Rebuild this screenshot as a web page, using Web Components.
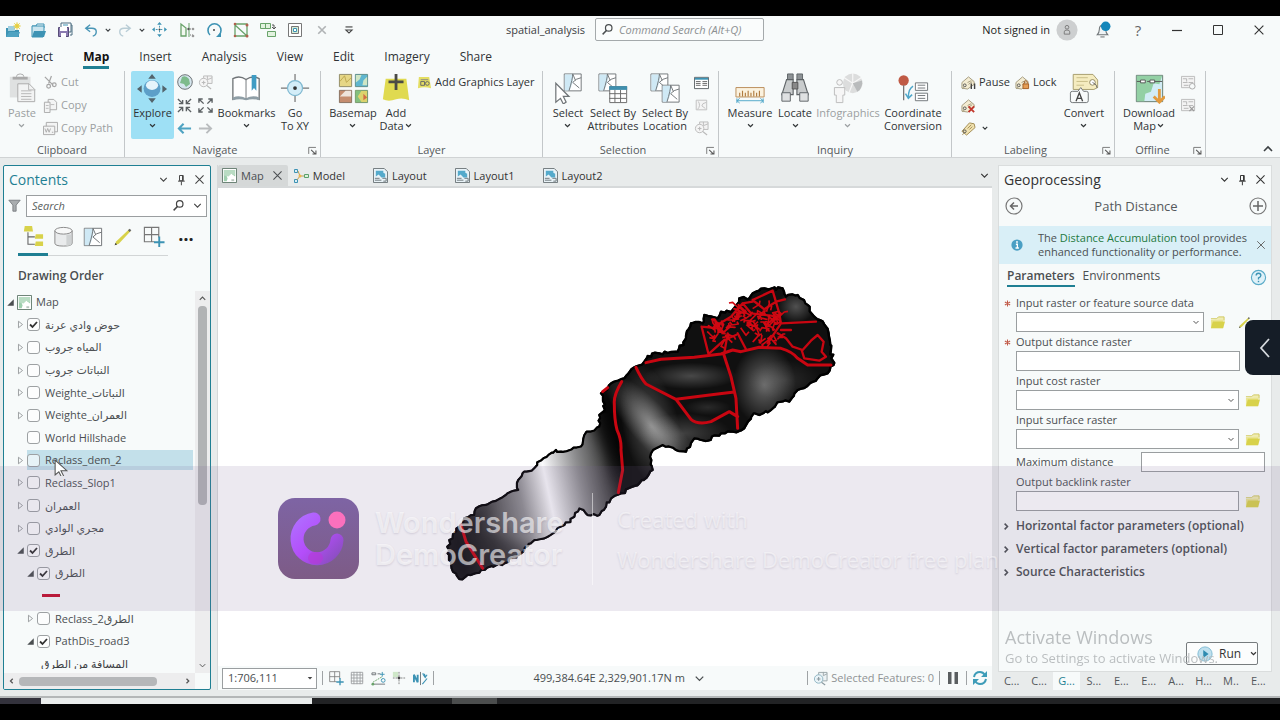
<!DOCTYPE html>
<html lang="en">
<head>
<meta charset="utf-8">
<title>spatial_analysis</title>
<style>
:root{--teal:#1f7f93;--ink:#3c4043;--line:#9da1a3;--face:#f7fafa;--ui:"Open Sans","Noto Sans","DejaVu Sans",sans-serif}
*{box-sizing:border-box}
body{margin:0;background:#000;color:var(--ink);font:11px/14px var(--ui)}
</style>
</head>
<body>
<gis-app></gis-app>
<script>
const BASE = `<style>*{box-sizing:border-box}:host{display:block}:host([hidden]){display:none}
button,input,select{font:inherit;color:inherit;margin:0;padding:0;background:none;border:0;border-radius:0;min-width:0}
button{display:inline-flex;align-items:center;justify-content:center}
a{color:inherit;text-decoration:none}ul{list-style:none;margin:0;padding:0}</style>`;

function define(name, html, setup) {
  const tpl = document.createElement('template');
  customElements.define(name, class extends HTMLElement {
    connectedCallback() {
      if (this.shadowRoot) return;
      tpl.innerHTML = BASE + (typeof html === 'function' ? html(this) : html);
      this.attachShadow({ mode: 'open' }).append(tpl.content.cloneNode(true));
      if (setup) setup(this, this.shadowRoot);
    }
  });
}

const G = '#6f7477', T = '#3d93b4', Y = '#d8d24a';
const tag = `<path d="M1 14V8l7-6 6 5v3l-7 5z" fill="#f4ecd2" stroke="#a39a7c"/><circle cx="4" cy="11" r="1.5" fill="none" stroke="#555"/><path d="M3 13q-2 2-1 2M7 8l4-2M8 10l4-3" stroke="#a39a7c" fill="none"/>`;
const sel = (x, y, s) => `<g transform="translate(${x} ${y}) scale(${s})"><path d="M0 0h18v18H0z" fill="#fff" stroke="${G}"/><path d="M.5.5h9q1 7-4 17h-5z" fill="#cfe9f5"/><path d="M9 0q0 5-4 18M18 4q-6 1-9 5l7 6M9 0l3 7" fill="none" stroke="${G}"/></g>`;
const globeMap = `<path d="M.5.5h15v15H.5z" fill="#fff" stroke="#617a6c"/><path d="M2 2h5l1 3-3 4 1 2-1 3H2zM8 2h6v7l-3-2z" fill="#9fd0ae"/><path d="M2 2h12v6l-4-2-3 3-5-1z" fill="#b9dcc3"/><path d="M10 12h3v2h-3z" fill="#b9c6be"/>`;
const layout = `<path d="M.5.5H12l3.500 3.500v11.500H.5z" fill="#e9f3f8" stroke="#6d7579"/><path d="M3 3h8v2l2 1v4H9L6 7 3 9z" fill="#55aacb"/><path d="M2 11h5M2 13h7M10 11h4v3h-3" stroke="#6d7579" fill="none"/>`;
const off = `<path d="M.5 1.500h14v12H.5z" fill="#f3f3f3" stroke="#bbb"/><path d="M2 4h4v3M8 4h5M2 8h5M8 8h5M3 11h5" stroke="#b5b5b5" fill="none"/>`;
const ICONS = {
  newproj:`<path d="M1 6h4l1 2h8v7H1z" fill="${T}"/><path d="M1 15l3-5h11l-2 5z" fill="#4fa3c2"/><path d="M3 4h7v5H3z" fill="#9fcfe0"/><circle cx="12" cy="4" r="2.500" fill="#f0dc55"/><path d="M12 0v8M8 4h8M9 1l6 6M15 1L9 7" stroke="#e2cc45" stroke-width=".7"/>`,
  open:`<path d="M1 4h4l1-2h7v4" fill="none" stroke="${T}"/><path d="M1 4h12v4l-1 7H1z" fill="#cbe5ef" stroke="${T}"/><path d="M1 15l2-6h12l-2 6z" fill="${T}"/>`,
  save:`<path d="M4 1h10v9H4z" fill="#fff" stroke="#4b6d80"/><path d="M14 3h1v10h-2" fill="none" stroke="#4b6d80"/><path d="M1.500 5.500h10v9h-10z" fill="#8a7ab0" stroke="#574d78"/><path d="M3 5h7v4H3zM4 11h5v4H4z" fill="#fff"/><path d="M6 3h5" stroke="${T}"/>`,
  undo:`<path d="M7 2L2 6l5 4M2 6h7q5 0 5 4t-4 5" fill="none" stroke="#4a96b6" stroke-width="1.600"/>`,
  redo:`<path d="M9 2l5 4-5 4M14 6H7q-5 0-5 4t4 5" fill="none" stroke="#b9cdd6" stroke-width="1.600"/>`,
  chev:`<path d="M5 6.500l3 3 3-3" fill="none" stroke="currentColor" stroke-width="1.500"/>`,
  chevW:`<path d="M4 6l4 4 4-4" fill="none" stroke="currentColor" stroke-width="1.400"/>`,
  chevU:`<path d="M4 10l4-4 4 4" fill="none" stroke="currentColor" stroke-width="1.600"/>`,
  chevR:`<path d="M6 5l3 3-3 3" fill="none" stroke="currentColor" stroke-width="1.700"/>`,
  chevL:`<path d="M9 5L6 8l3 3" fill="none" stroke="currentColor" stroke-width="1.700"/>`,
  move:`<path d="M8 0l2.500 3h-5zM8 16l2.500-3h-5zM0 8l3-2.500v5zM16 8l-3-2.500v5z" fill="${T}"/><path d="M8 4v3M8 9v3M4 8h3M9 8h3" stroke="${T}" stroke-dasharray="2 1"/><circle cx="8" cy="8" r="1" fill="#444"/>`,
  split:`<path d="M2 2v12h5V6z" fill="#f2f9f0" stroke="#69a36a" stroke-width="1.300"/><path d="M10 1v14" stroke="#69a36a"/><path d="M11 7h3M11 13h3" stroke="#777" stroke-dasharray="1 1"/><circle cx="9.500" cy="7" r="1.200" fill="#555"/><circle cx="14" cy="7" r="1.300" fill="#999"/><circle cx="14" cy="14" r="1.300" fill="#999"/>`,
  rotate:`<path d="M4 13a6.500 6.500 0 1 1 9 0" fill="none" stroke="${T}" stroke-width="1.600"/><path d="M10 15h5v-5z" fill="${T}"/><circle cx="8" cy="8" r="1" fill="#444"/>`,
  verts:`<path d="M2 2h12v12L2 3v11h12" fill="none" stroke="#69a36a" stroke-width="1.300"/><g fill="#b0604d"><circle cx="2" cy="2" r="1.300"/><circle cx="14" cy="3" r="1.500"/><circle cx="14" cy="14" r="1.500"/><circle cx="2" cy="14" r="1.300"/></g>`,
  merge:`<path d="M.5 1.500h10v5H.5zM5.500 1.500v5M7.500 9.500h8v5h-8z" fill="#e2f2df" stroke="#69a36a"/><path d="M12 3h2v4m-2-2l2 2 2-2" fill="none" stroke="#555"/>`,
  frame:`<path d="M1.500 1.500h13v13h-13z" fill="#fff" stroke="#777"/><path d="M4.500 4.500h7v7h-7z" fill="#d3ead3" stroke="#777"/><path d="M6.500 6.500h3v3h-3z" fill="#fff" stroke="${T}"/>`,
  x:`<path d="M3 3l10 10M13 3L3 13" stroke="currentColor" stroke-width="1.300"/>`,
  xq:`<path d="M3 3l10 10M13 3L3 13" stroke="currentColor" stroke-width="2.200"/>`,
  custom:`<path d="M4 4.500h8" stroke="#444" stroke-width="1.300"/><path d="M4.500 8L8 11.500 11.500 8z" fill="none" stroke="#444" stroke-width="1.300"/>`,
  search:`<circle cx="9.500" cy="6" r="4" fill="none" stroke="currentColor" stroke-width="1.500"/><path d="M7 9l-5 5" stroke="currentColor" stroke-width="1.800"/>`,
  user:`<circle cx="12" cy="12" r="11.500" fill="#cdcfd0"/><circle cx="12" cy="9" r="2" fill="none" stroke="#777"/><path d="M9 16.500v-2.500q0-2 3-2t3 2v2.500z" fill="none" stroke="#777"/>`,
  bell:`<path d="M3 13q2-2 2-5 0-4 3-4t3 4q0 3 2 5z" fill="#eef3f5" stroke="${G}"/><path d="M6 15h4" stroke="${G}"/><circle cx="11" cy="5" r="4.500" fill="#1386ba"/>`,
  min:`<path d="M3 8.500h10" stroke="#333" stroke-width="1.200"/>`,
  max:`<path d="M3.500 3.500h9v9h-9z" fill="none" stroke="#333"/>`,
  paste:`<path d="M3 4h22v22H3z" fill="#dfe1e1"/><path d="M6 4h16v3H6z" fill="#aaa"/><path d="M10 4q0-3 4-3t4 3" fill="none" stroke="#aaa"/><path d="M11.500 11.500h12l6 6v13h-18z" fill="#f2f3f3" stroke="#aaa"/><path d="M23 11v7h7M15 19h11M15 22h11M15 25h11M15 28h11" stroke="#b5b5b5" fill="none"/>`,
  cut:`<path d="M2 2l9 9M9 1L6 9" stroke="#a5a5a5" stroke-width="1.300"/><circle cx="6" cy="12" r="2" fill="none" stroke="#a5a5a5" stroke-width="1.300"/><circle cx="12" cy="10.500" r="2" fill="none" stroke="#a5a5a5" stroke-width="1.300"/>`,
  copy:`<path d="M5.500 1.500h6l3 3v8h-9z" fill="#f3f4f4" stroke="#aaa"/><path d="M1.500 4.500h6v11h-6z" fill="#f3f4f4" stroke="#aaa"/><path d="M3 8h3M3 11h3M8 7h4" stroke="#bbb"/>`,
  copypath:`<path d="M3.500 1.500h12v10h-12z" fill="#f3f4f4" stroke="#aaa"/><path d="M.5 5.500h12v9H.5z" fill="#f3f4f4" stroke="#aaa"/><path d="M2 8l1.500 4L5 8l1.500 4L8 8M9.500 12h1.500" stroke="#aaa" fill="none"/>`,
  explore:`<path d="M16 1l4 5h-8zM16 32l4-5h-8zM0 17l5-4v8zM32 17l-5-4v8z" fill="#53646c"/><circle cx="16" cy="16.500" r="9" fill="#5d9fc8"/><ellipse cx="16" cy="13" rx="6.500" ry="5" fill="#e5f4fb"/>`,
  globe:`<circle cx="8" cy="8" r="7.300" fill="#d5e6ee" stroke="${G}"/><path d="M5 3q4-2 7 2l1 5-4 3-2-3-4-1z" fill="#7dbb8c"/>`,
  zoomsel:`<path d="M6 1h9v8H6z" fill="#f3f3f3" stroke="#bbb"/><path d="M10 1v4l5-2" stroke="#bbb" fill="none"/><circle cx="6" cy="8" r="4.500" fill="#f5f5f5" stroke="#bbb"/><path d="M4 8h4M6 6v4M9 11l5 4" stroke="#bbb" stroke-width="1.200"/>`,
  zin:`<path d="M1 1l5 5M6 2v4H2M15 1l-5 5M10 2v4h4M1 15l5-5M2 10h4v4M15 15l-5-5M14 10h-4v4" fill="none" stroke="#5c6164" stroke-width="1.500"/>`,
  zout:`<path d="M1 1l5 5M1 5V1h4M15 1l-5 5M11 1h4v4M1 15l5-5M1 11v4h4M15 15l-5-5M15 11v4h-4" fill="none" stroke="#5c6164" stroke-width="1.500"/>`,
  back:`<path d="M15 8H2M7 3L2 8l5 5" fill="none" stroke="#4fa3c2" stroke-width="2.200"/>`,
  fwd:`<path d="M1 8h13M9 3l5 5-5 5" fill="none" stroke="#b9bcbe" stroke-width="2"/>`,
  book:`<path d="M2 6q7-4 14 1 7-5 14-1v22q-7-3-14 0-7-3-14 0z" fill="#fff" stroke="${G}" stroke-width="1.400"/><path d="M2 26q7-3 14 1 7-4 14-1v3q-7-2-14 0-7-2-14 0z" fill="#8f9ea6"/><path d="M16 7v20" stroke="${G}"/><path d="M22 2h5v17l-2.500-3-2.500 3z" fill="#3f9cc4"/>`,
  goxy:`<path d="M16 1v9M16 22v9M1 16h9M22 16h9" stroke="#777" stroke-width="1.300"/><circle cx="16" cy="16" r="8" fill="#d3edf8" stroke="#7fb8d0" stroke-width="1.300"/><circle cx="16" cy="16" r="2" fill="#333"/>`,
  basemap:`<path d="M1.500 1.500h13v13h-13z" fill="#e6d787" stroke="#8e8a66"/><path d="M2 9l5-6 2 7 5-5" stroke="#bda850" fill="none"/><path d="M18.500 1.500h13v13h-13z" fill="#5fb6cf" stroke="#5d8c86"/><path d="M19 2h6l-2 5-4 3zM27 8l4-4v9h-5z" fill="#cfe6c5"/><path d="M1.500 18.500h13v13h-13z" fill="#c58d6f" stroke="#86705f"/><path d="M2 25l6-6h6v6z" fill="#eee4dc"/><path d="M18.500 18.500h13v13h-13z" fill="#dcd36d" stroke="#6c936b"/><path d="M19 19h6l-4 6 4 6h-6z" fill="#83c07e"/><path d="M27 22l4 4-4 3z" fill="#d36d45"/>`,
  adddata:`<path d="M5 6h22l3 23q-7-3-14-1-8 3-14 0z" fill="#e0da50"/><path d="M16 1v17M8 9.500h16" stroke="#4b4b46" stroke-width="3"/>`,
  addgfx:`<path d="M2 2h11l2 12q-7-2-14 0z" fill="#e4de62"/><path d="M4 7h4v4H4z" fill="none" stroke="#666"/><circle cx="11" cy="9" r="2" fill="none" stroke="#666"/><path d="M4 5h8" stroke="#888"/>`,
  select:`${sel(12,1,1)}<path d="M3 11v20l5-4 3 6 3-2-3-6h6z" fill="#fff" stroke="${G}" stroke-width="1.300"/>`,
  selattr:`${sel(1,1,1)}<path d="M12.500 14.500h18v17h-18z" fill="#fff" stroke="#666"/><path d="M12 14h19v4H12z" fill="#3f8fae"/><path d="M12 22h18M12 27h18M18 18v13M24 18v13" stroke="#666"/>`,
  selloc:`${sel(1,1,1)}${sel(13,13,1)}`,
  table:`<path d="M.5 2.500h15v12H.5z" fill="#fff" stroke="#5c6265"/><path d="M1 3h14v2H1z" fill="${T}"/><path d="M2 7h5M2 9h5M2 11h5M9 7h5M9 9h5M9 11h5" stroke="#666"/>`,
  selclr:`<path d="M2.500 2.500h12v11h-12z" fill="#f4f4f4" stroke="#bbb"/><path d="M5 4q3 5-1 9M14 5q-5 1-5 4l4 3" stroke="#bbb" fill="none"/>`,
  measure:`<path d="M1 15.500h30v10H1z" fill="#fbf2df" stroke="#b98b56"/><path d="M5 25v-4M8 25v-6M11 25v-4M14 25v-6M17 25v-4M20 25v-6M23 25v-4M26 25v-6" stroke="#b07a3e" stroke-width="1.200"/><path d="M2 29.500h28M2 27v5M30 27v5M5 27l-3 2.500L5 32M27 27l3 2.500-3 2.500" fill="none" stroke="#4fa6c9"/>`,
  locate:`<path d="M8 1h6v6H8zM18 1h6v6h-6z" fill="#8d9295" stroke="#5e6366"/><path d="M7 7h7v16H2zM25 7h-7v16h12z" fill="#c9cccd" stroke="#5e6366" stroke-width="1.200"/><path d="M2 21h9v9H2zM21 21h9v9h-9z" fill="#dfe1e2" stroke="#5e6366"/><path d="M13 10h6v7h-6z" fill="#888" stroke="#555"/>`,
  info:`<circle cx="21" cy="11" r="10.500" fill="#dcdddd"/><path d="M21 11V0M21 11l10 4M21 11L12 5M21 11l-4 10M21 11l9-6" stroke="#f6f6f6" stroke-width="1.300"/><path d="M21 11l10-3q1 8-5 12z" fill="#b9bbbc"/><circle cx="7" cy="10" r="3" fill="#f6f6f6" stroke="#bbb"/><path d="M1.500 15.500h11v8h-2v8h-7v-8h-2z" fill="#f6f6f6" stroke="#bbb"/>`,
  coord:`<circle cx="6" cy="8" r="5.500" fill="#c05a45"/><path d="M6 13v16" stroke="#777" stroke-width="1.400"/><path d="M16 14q-5 3-5 12m-3-4l3 5 4-4" fill="none" stroke="#4fa6c9" stroke-width="1.600"/><path d="M18.500 10.500h13v8h-13zM18.500 21.500h13v8h-13z" fill="#fff" stroke="${G}"/><path d="M21 13h8M21 16h8M21 24h8M21 27h8" stroke="${G}"/>`,
  pauseL:`${tag}<path d="M11 9v6M14.500 9v6" stroke="#444" stroke-width="1.500"/>`,
  lockL:`${tag}<path d="M8.500 9.500h6v5h-6z" fill="#e59d55" stroke="#a35d20"/><path d="M10 9V7q1.500-2 3 0v2" fill="none" stroke="#a35d20"/>`,
  tagx:`${tag}<path d="M8 9l6 6M14 9l-6 6" stroke="#c2372c" stroke-width="2"/>`,
  tagm:`<path d="M1 11l8-9 5 1 1 4-9 8z" fill="#f1e2b0" stroke="#a08a50"/><circle cx="4" cy="11" r="1.500" fill="none" stroke="#555"/><path d="M3 13q-2 2-1 2M7 8l4-4M9 9l3-3" stroke="#a08a50" fill="none"/>`,
  convert:`<path d="M4.500 1.500h21l5 6v8l-4 2h-22z" fill="#f5ecc0" stroke="#a49a6a"/><path d="M8 5h12M8 9h12M8 13h8" stroke="#c9bd86"/><circle cx="25" cy="10" r="3" fill="#fff" stroke="#8c8258"/><path d="M25 10q5 2 5 6" fill="none" stroke="#666"/><path d="M3.500 19.500h6l3-4 3 4h3q2 0 2 2v8q0 2-2 2h-15q-2 0-2-2v-8q0-2 2-2z" fill="#f8fafa" stroke="#6c7072"/><path d="M7.500 30l3.500-9 3.500 9M9 27h4" fill="none" stroke="#444" stroke-width="1.400"/>`,
  download:`<path d="M2.500 2.500h28v28h-28z" fill="#d2ecf5" stroke="#617a6c"/><path d="M3 3h27l-3 9-6-1-3 9-6 2-1 8H3z" fill="#93d0a4"/><path d="M3 9h7M14 9h3M21 9h9" stroke="#555"/><path d="M7 7.500h5v3H7zM17 7.500h5v3h-5z" fill="#fff" stroke="#555"/><path d="M27 17v14m-6-6l6 6 6-6" fill="none" stroke="#e29a3e" stroke-width="3"/>`,
  off1:`${off}<circle cx="12" cy="12" r="3" fill="#f7fafa" stroke="#aaa"/>`,
  off2:`${off}<path d="M9 9l5 5M14 9l-5 5" stroke="#999" stroke-width="1.300"/>`,
  launch:`<path d="M2.500 13V3.500H13" fill="none" stroke="#666" stroke-width="1.200"/><path d="M6 7l6 6M13 8v5H8" fill="none" stroke="#555" stroke-width="1.500"/>`,
  pin:`<path d="M6 2h5v7H6zM4 9.500h9M8.500 10v5M10 2v7" fill="none" stroke="currentColor" stroke-width="1.300"/>`,
  filter:`<path d="M1 1.500h14l-5 6V15H6V7.500z" fill="#a9adaf" stroke="#6f7477"/>`,
  tree:`<path d="M3 1h8l1 6H2zM15 10h8v5h-9zM15 18h8v5h-9z" fill="${Y}"/><path d="M6.500 8v13H14M7 13h7" fill="none" stroke="#666" stroke-width="1.200"/>`,
  db:`<path d="M3 6v13q0 3 9 3t9-3V6z" fill="#e9ebec" stroke="#888"/><ellipse cx="12" cy="6" rx="9" ry="3.500" fill="#f7f8f8" stroke="#888"/><path d="M15 10h5v11l-5 1z" fill="#cfd2d3"/>`,
  selpane:`${sel(2.5,2.5,1.05)}`,
  pencil:`<path d="M2 22l2-5L19 3l2 2L7 20z" fill="${Y}"/><path d="M18 4l2-2 2 2-2 2z" fill="#666"/><path d="M2 22l1-3 2 2z" fill="#444"/>`,
  grid:`<path d="M2.500 2.500h15v15h-15zM10 2.500v15M2.500 10h15" fill="#f7fafa" stroke="#777" stroke-width="1.200"/><path d="M18 13v10M13 18h10" stroke="#f7fafa" stroke-width="4"/><path d="M18 12v11M12.500 18h11" stroke="${T}" stroke-width="2"/>`,
  map:globeMap, layout,
  model:`<path d="M1.500 1.500h3v3h-3zM1.500 11.500h3v3h-3z" fill="#d9eef6" stroke="${T}"/><path d="M5 3l2 5-3 4M8 8h3" fill="none" stroke="#b9a05a"/><circle cx="7" cy="8" r="1.500" fill="#f0b64a"/><path d="M11.500 6.500h4v3h-4z" fill="#dff0da" stroke="#5aa26b"/>`,
  snapgrid:`<path d="M1.500 1.500h13v13h-13zM4.500 1v14M8 1v14M11.500 1v14M1 4.500h14M1 8h14M1 11.500h14" fill="none" stroke="#9b9fa1"/>`,
  snap:`<path d="M1 2h4v2H1zM7 3h3M1 14h14" stroke="${G}" fill="none"/><path d="M12 1v5M9.500 3.500h5" stroke="${T}"/><path d="M2 12l10-6" stroke="#69a36a" stroke-dasharray="2 1"/><circle cx="13" cy="10" r="2" fill="none" stroke="${T}"/><circle cx="2" cy="14" r="1.500" fill="#69a36a"/>`,
  infer:`<path d="M1 1h6v6H1z" fill="#cfe8c9"/><path d="M8 1v14M1 8h14" stroke="#777" stroke-dasharray="2 1"/><circle cx="8" cy="8" r="1.600" fill="#444"/>`,
  north:`<path d="M1 12V4l4 8V4" fill="none" stroke="${T}" stroke-width="2"/><path d="M8 1v14" stroke="${G}"/><path d="M10 14l5-6M10 3q3 0 3 3m-2-2l2 3 2-3" fill="none" stroke="${T}" stroke-width="1.200"/>`,
  zsel:`<path d="M6 1.500h9v9H6z" fill="#edf3f5" stroke="#9ba6aa"/><path d="M11 1v4l4-2" stroke="#9ba6aa" fill="none"/><circle cx="6" cy="8.500" r="4.500" fill="#eaf4f8" stroke="#8fb4c2"/><path d="M4 8.500h4M6 6.500v4M9 12l4 3" stroke="#8b9aa0" stroke-width="1.200"/>`,
  pause:`<path d="M3 2h3.500v12H3zM9.500 2H13v12H9.500z" fill="#5a5e60"/>`,
  refresh:`<path d="M2 7q1-5 6-5 3 0 5 3M14 9q-1 5-6 5-3 0-5-3" fill="none" stroke="#3d9cb8" stroke-width="2"/><path d="M15 1v6H9zM1 15V9h6z" fill="#3d9cb8"/>`,
  backc:`<circle cx="9" cy="9" r="8" fill="none" stroke="#777" stroke-width="1.200"/><path d="M13 9H5.500M9 5.500L5.500 9 9 12.500" fill="none" stroke="#666" stroke-width="1.500"/>`,
  addc:`<circle cx="9" cy="9" r="8" fill="none" stroke="#777" stroke-width="1.200"/><path d="M9 4v10M4 9h10" stroke="#666" stroke-width="1.500"/>`,
  helpc:`<circle cx="9" cy="9" r="7.500" fill="#dff1f8" stroke="#5aabc8" stroke-width="1.200"/><path d="M6.500 7q0-2.500 2.500-2.500T11.500 7Q11.500 8.500 9 9.500V11" fill="none" stroke="#3d93b4" stroke-width="1.400"/><path d="M9 12.500v1.500" stroke="#3d93b4" stroke-width="1.500"/>`,
  infoc:`<circle cx="8" cy="8" r="7.500" fill="#4a9fc4"/><path d="M6.500 7H8.500v5M6 12h4.500" fill="none" stroke="#fff" stroke-width="1.700"/><circle cx="8" cy="4" r="1.200" fill="#fff"/>`,
  folder:`<path d="M1 4h6l2-2h6v4" fill="#f0ecb4" stroke="#cfc75a"/><path d="M1 14V5h13v9z" fill="#eae593"/><path d="M1 14l2-7h13l-2 7z" fill="${Y}"/>`,
  run:`<circle cx="9" cy="9" r="8" fill="#bfe0ee" stroke="#7ab8d2"/><path d="M7 4.500v9l6-4.500z" fill="#2f8bb0"/>`,
  tri:`<path d="M5.500 4v8l5-4z" fill="none" stroke="#8b8f91"/>`,
  trio:`<path d="M12 4v8H4z" fill="#4a4e50"/>`,
  ast:`<path d="M8 1v14M2 4.500l12 7M14 4.500l-12 7" stroke="#c25a48" stroke-width="2.400"/>`,
  arrow:`<path d="M2 1v14l3.500-3 2.500 5 2-1-2.500-5H13z" fill="#fff" stroke="#555"/>`
};
const BIG = new Set(['paste','explore','book','goxy','basemap','adddata','select','selattr','selloc','measure','locate','info','coord','convert','download']);
const MID = new Set(['tree','db','selpane','pencil','grid','user']);
const ROUND = new Set(['backc','addc','helpc','run']);

define('ui-icon', el => {
  const n = el.getAttribute('name'), s = el.getAttribute('size') || 16;
  const v = BIG.has(n) ? 33 : MID.has(n) ? 24 : ROUND.has(n) ? 18 : 16;
  return `<style>:host{display:inline-flex;flex:none}svg{display:block}</style><svg width="${s}" height="${s}" viewBox="0 0 ${v} ${v}" fill="none" aria-hidden="true">${ICONS[n]}</svg>`;
});

const ib = (n, label, s = 16, c = '') => `<button type="button" class="${c}" aria-label="${label}"><ui-icon name="${n}" size="${s}"></ui-icon></button>`;

define('title-bar', `<style>
:host{display:grid;grid-template-columns:minmax(0,1fr) auto minmax(0,1fr);align-items:center;height:27px}
.tools{display:flex;align-items:center}.tools button{width:27px;height:24px}.tools .a{width:26px}.tools .c{width:8px}.tools .off{color:#b0b3b5}
.mid{display:flex;align-items:center;gap:10px;margin-right:10px}
label{display:flex;align-items:center;gap:5px;border:1px solid #a4a9ab;border-radius:2px;width:169px;height:23px;padding:0 4px 0 5px;color:#4a4e50;background:#fafcfc}
input{flex:1;outline:0;font-style:italic}input::placeholder{color:#8c9092;opacity:1}
.right{display:flex;align-items:center;justify-content:flex-end;color:#222;padding-right:1px}
.right button{width:41px;height:24px;color:#333}.right .n{width:36px}.right .av{width:34px}.right .q{font-size:15px;color:#666}
</style>
<div class="tools">${ib('newproj','New project',16,'a')}${ib('open','Open',16,'a')}${ib('save','Save',16,'a')}${ib('undo','Undo',14,'a')}${ib('chev','Undo list',12,'c')}${ib('redo','Redo',14,'a')}${ib('chev','Redo list',12,'c')}${ib('move','Move',15)}${ib('split','Split')}${ib('rotate','Rotate')}${ib('verts','Edit vertices')}${ib('merge','Merge')}${ib('frame','Frame')}${ib('xq','Clear',12,'off')}${ib('custom','Customize toolbar',14)}</div>
<div class="mid"><span>spatial_analysis</span><label><ui-icon name="search" size="13"></ui-icon><input type="search" placeholder="Command Search (Alt+Q)" aria-label="Command Search"></label></div>
<div class="right"><span>Not signed in</span>${ib('user','Account',22,'av')}${ib('bell','Notifications',17,'n')}<button type="button" class="n q" aria-label="Help">?</button>${ib('min','Minimize')}${ib('max','Maximize')}${ib('x','Close',14)}</div>`);

define('ribbon-tabs', `<style>
nav{display:flex;gap:30px;padding:2px 14px 0;height:28px;align-items:center;font-size:12px;line-height:16px;color:#303336}
a{padding:2px 0 1px;border-bottom:3px solid transparent}a[aria-current]{font-weight:700;color:#111;border-color:var(--teal)}
</style><nav><a href="#project">Project</a><a href="#map" aria-current="page">Map</a><a href="#insert">Insert</a><a href="#analysis">Analysis</a><a href="#view">View</a><a href="#edit">Edit</a><a href="#imagery">Imagery</a><a href="#share">Share</a></nav>`);

define('ribbon-group', el => `<style>
:host{display:grid;grid-template-rows:1fr 14px;border-right:1px solid #c3c7c9;min-width:0}
.body{display:flex;align-items:flex-start;padding:0 0 0 var(--pad,6px)}
.foot{display:flex;align-items:center;text-align:center;color:#55595c}
.foot span{flex:1}.foot button{width:15px;height:14px}
</style><div class="body"><slot></slot></div><div class="foot"><span>${el.getAttribute('label')}</span>${el.hasAttribute('launch') ? ib('launch', el.getAttribute('label') + ' options', 11) : ''}</div>`);

define('big-button', el => `<style>
:host{width:var(--w)}
button{flex-direction:column;justify-content:flex-start;width:100%;height:68px;padding:2px 0 0;line-height:13px;color:#2f3335;white-space:nowrap}
:host([on]) button{background:#9ee0f5;border-radius:2px}:host([disabled]) button{color:#9b9fa1}
.t{display:flex;flex-direction:column;align-items:center;padding-top:2px}.l{display:flex;align-items:center;height:13px}ui-icon[name=chev]{margin:0 -2px}
</style><button type="button"${el.hasAttribute('disabled') ? ' disabled' : ''}><ui-icon name="${el.getAttribute('icon')}" size="31"></ui-icon><span class="t"><span class="l">${el.getAttribute('l1')}</span><span class="l">${el.getAttribute('l2') || ''}${el.hasAttribute('menu') ? '<ui-icon name="chev" size="13"></ui-icon>' : ''}</span></span></button>`);

define('small-button', el => `<style>
:host{display:flex}button{height:22px;gap:3px;padding:0 1px;color:#2f3335;white-space:nowrap}:host([disabled]) button{color:#9b9fa1}
</style><button type="button"${el.hasAttribute('disabled') ? ' disabled' : ''} aria-label="${el.getAttribute('label')}"><ui-icon name="${el.getAttribute('icon')}" size="${el.getAttribute('size') || 15}"></ui-icon>${el.hasAttribute('text') ? `<span>${el.getAttribute('label')}</span>` : ''}${el.hasAttribute('menu') ? '<ui-icon name="chev" size="12"></ui-icon>' : ''}</button>`);

const bb = (i, w, a, b = '', x = '') => `<big-button icon="${i}" style="--w:${w}px" l1="${a}" l2="${b}" ${x}></big-button>`;
const sb = (i, l, x = '') => `<small-button icon="${i}" label="${l}" ${x}></small-button>`;
define('ribbon-bar', `<style>
:host{display:grid;grid-template-columns:125px 196px 222px 176px 233px 163px 91px 1fr;height:87px;border-bottom:1px solid #d0d3d4}
.col{display:grid;justify-items:start;align-content:start;grid-auto-rows:23px;align-items:start}.two{grid-template-columns:21px 21px;justify-items:center}
.one{width:20px;justify-items:center}.end{display:flex;align-items:flex-end;justify-content:flex-end;padding:0 4px 0 0}.lock{width:48px}.pause{width:54px}
</style>
<ribbon-group label="Clipboard" style="--pad:2px">${bb('paste',40,'Paste','','menu disabled')}<div class="col">${sb('cut','Cut','text disabled')}${sb('copy','Copy','text disabled')}${sb('copypath','Copy Path','text disabled')}</div></ribbon-group>
<ribbon-group label="Navigate" launch>${bb('explore',43,'Explore','','menu on')}<div class="col two">${sb('globe','Full extent','size="16"')}${sb('zoomsel','Zoom to selection','disabled')}${sb('zin','Fixed zoom in')}${sb('zout','Fixed zoom out')}${sb('back','Previous extent')}${sb('fwd','Next extent','disabled')}</div>${bb('book',61,'Bookmarks','','menu')}${bb('goxy',36,'Go','To XY')}</ribbon-group>
<ribbon-group label="Layer">${bb('basemap',52,'Basemap','','menu')}${bb('adddata',34,'Add','Data','menu')}<div class="col" style="padding-left:3px">${sb('addgfx','Add Graphics Layer','text')}</div></ribbon-group>
<ribbon-group label="Selection" launch>${bb('select',38,'Select','','menu')}${bb('selattr',52,'Select By','Attributes')}${bb('selloc',52,'Select By','Location')}<div class="col one">${sb('table','Attribute table')}${sb('selclr','Clear selection','disabled size="14"')}${sb('zoomsel','Zoom to selection','disabled')}</div></ribbon-group>
<ribbon-group label="Inquiry">${bb('measure',50,'Measure','','menu')}${bb('locate',40,'Locate','','menu')}${bb('info',66,'Infographics','','menu disabled')}${bb('coord',64,'Coordinate','Conversion')}</ribbon-group>
<ribbon-group label="Labeling" launch style="--pad:8px"><div class="col pause">${sb('pauseL','Pause','text')}${sb('tagx','View unplaced')}${sb('tagm','More labeling','menu')}</div><div class="col lock">${sb('lockL','Lock','text')}</div>${bb('convert',44,'Convert','','menu')}</ribbon-group>
<ribbon-group label="Offline" launch style="--pad:8px">${bb('download',52,'Download','Map','menu')}<div class="col one" style="margin-left:3px">${sb('off1','Sync','disabled')}${sb('off2','Remove','disabled')}</div></ribbon-group>
<div class="end">${ib('chevU','Collapse ribbon',16)}</div>`);

const paneHead = t => `<header class="head"><h2>${t}</h2>${ib('chevW','Options',13)}${ib('pin','Auto hide',12)}${ib('x','Close',13)}</header>`;
const headCss = `.head{display:flex;align-items:center;height:27px;padding:0 2px 0 5px;color:#444}.head h2{flex:1;margin:0;font-weight:400;font-size:14px;line-height:20px}.head button{width:18px;height:18px}`;

define('tree-item', el => {
  const c = el.getAttribute('toggle'), l = el.getAttribute('label');
  return `<style>
:host{display:flex;align-items:center;min-height:0}
.row{display:flex;align-items:center;width:100%;height:20px;padding-left:calc(var(--d,0) * 10px + 10px)}
:host([selected]) .hl{background:#c3e0ea}
.tg{width:13px;height:14px;flex:none}.hl{display:flex;align-items:center;flex:1;height:20px;gap:4px;white-space:nowrap;color:#4b4f52}
input{appearance:none;width:13px;height:13px;border:1px solid #9da1a3;border-radius:3px;background:rgba(255,255,255,.6);flex:none}
input:checked{background:#fdfefe url("data:image/svg+xml,%3Csvg xmlns='http://www.w3.org/2000/svg' viewBox='0 0 11 11'%3E%3Cpath d='M2 5.500l2.500 2.500L9 3' fill='none' stroke='%23333' stroke-width='1.800'/%3E%3C/svg%3E") center/11px no-repeat}
label{display:flex;align-items:center;gap:5px}.red{width:18px;height:3px;background:#c40f2c;margin-left:18px}.cap{margin-left:17px}
</style><div class="row">${el.hasAttribute('symbol') ? '<span class="red"></span>' : el.hasAttribute('caption') ? `<span class="cap" dir="rtl">${l}</span>` :
`${c ? ib(c === 'open' ? 'trio' : 'tri', 'Expand', 13, 'tg') : '<span class="tg"></span>'}<span class="hl">${el.hasAttribute('root') ? `<ui-icon name="map" size="15"></ui-icon><span>${l}</span>` : `<label><input type="checkbox"${el.hasAttribute('checked') ? ' checked' : ''}><bdi>${l}</bdi></label>`}</span>`}</div>`;
});

const ti = (l, d, t, x = '') => `<tree-item label="${l}" style="--d:${d}" ${t ? `toggle="${t}"` : ''} ${x}></tree-item>`;
define('contents-pane', `<style>${headCss}
:host{display:flex;flex-direction:column;background:var(--face);border:1px solid var(--teal);border-radius:2px;min-height:0;overflow:hidden}
.head h2{color:var(--teal)}
.find{display:flex;gap:5px;align-items:center;height:25px;padding:0 3px 0 4px}
.find label{flex:1;min-width:0;display:flex;align-items:center;border:1px solid #9a9ea0;height:22px;padding:0 2px 0 5px;background:#fff;gap:6px;color:#444}
.find input{flex:1;width:0;outline:0;font-style:italic}.find input::placeholder{color:#5b5f61;opacity:1}
.modes{display:flex;align-items:center;height:38px;padding:0 0 0 14px}.modes button{width:30px;height:38px;border-bottom:1px solid #d2d5d6}.modes .on{border-bottom:3px solid var(--teal)}.modes .dots{border:0;width:36px;color:#222;font-weight:700;font-size:18px;padding-bottom:6px}
h3{margin:0;padding:5px 14px 0;font-size:12px;line-height:30px;height:35px;font-weight:600;color:#4a4e50}
.scroll{flex:1;display:grid;grid-template-columns:1fr 15px;grid-template-rows:minmax(0,1fr) 16px;min-height:0}
.clip{overflow:hidden;min-height:0;margin-bottom:4px}.rows{display:grid;grid-auto-rows:minmax(0,1fr);height:calc(100% + 6px)}
.rows tree-item{margin-right:2px}
.sb{display:flex;align-items:center;background:#ededee;color:#555}.v{flex-direction:column}.v i{width:9px;height:199px;border-radius:4px;background:#b1b3b5}.h i{height:9px;width:138px;border-radius:4px;background:#b5b7b9}.grow{flex:1}
.sb button{width:15px;height:15px}
</style>${paneHead('Contents')}
<div class="find"><ui-icon name="filter" size="13"></ui-icon><label><input type="search" placeholder="Search" aria-label="Search contents"><ui-icon name="search" size="13"></ui-icon><ui-icon name="chevW" size="13"></ui-icon></label></div>
<div class="modes">${ib('tree','List by drawing order',22,'on')}${ib('db','List by data source',23)}${ib('selpane','List by selection',22)}${ib('pencil','List by editing',20)}${ib('grid','List by snapping',23)}<button type="button" class="dots" aria-label="More">…</button></div>
<h3>Drawing Order</h3>
<div class="scroll"><div class="clip"><div class="rows">
${ti('Map',-1,'open','root')}${ti('حوض وادي عرنة',0,'closed','checked')}${ti('المياه جروب',0,'closed')}${ti('النباتات جروب',0,'closed')}${ti('Weighte_النباتات',0,'closed')}${ti('Weighte_العمران',0,'closed')}${ti('World Hillshade',0,'')}${ti('Reclass_dem_2',0,'closed','selected')}${ti('Reclass_Slop1',0,'closed')}${ti('العمران',0,'closed')}${ti('مجري الوادي',0,'closed')}${ti('الطرق',0,'open','checked')}${ti('الطرق',1,'open','checked')}${ti('',1,'','symbol')}${ti('Reclass_2الطرق',1,'closed')}${ti('PathDis_road3',1,'open','checked')}${ti('المسافة من الطرق',1,'','caption')}
</div></div>
<div class="sb v">${ib('chevU','Scroll up',11)}<i></i><span class="grow"></span>${ib('chevW','Scroll down',11)}</div>
<div class="sb h">${ib('chevL','Scroll left',12)}<i></i><span class="grow"></span>${ib('chevR','Scroll right',12)}</div></div>`);

define('map-drawing', `<style>:host{display:block;min-height:0;background:#fff;overflow:hidden}svg{display:block;width:100%;height:100%}</style>
<svg viewBox="217 188 774 478" role="img" aria-label="Path distance raster with roads">
<defs><linearGradient id="w" gradientUnits="userSpaceOnUse" x1="60" y1="710" x2="575" y2="600"><stop offset="0" stop-color="#1c1c1e"/><stop offset=".2" stop-color="#484848"/><stop offset=".4" stop-color="#8f8f91"/><stop offset=".52" stop-color="#dededf"/><stop offset=".56" stop-color="#fafafc"/><stop offset=".62" stop-color="#d8d8da"/><stop offset=".75" stop-color="#8e8e90"/><stop offset=".9" stop-color="#464646"/><stop offset="1" stop-color="#0c0c0c"/></linearGradient>
<radialGradient id="g"><stop offset="0" stop-color="#fff" stop-opacity=".9"/><stop offset=".5" stop-color="#fff" stop-opacity=".45"/><stop offset="1" stop-color="#fff" stop-opacity="0"/></radialGradient>
<clipPath id="c"><path class="edge"/></clipPath><filter id="b" x="-30%" y="-30%" width="160%" height="160%"><feGaussianBlur stdDeviation="20"/></filter></defs>
<g transform="translate(430 270) scale(.3333)">
<path class="edge" fill="#101010" stroke="#000" stroke-width="7" stroke-linejoin="round"/>
<g clip-path="url(#c)">
<path d="M0 430H548L570 530 565 700 300 1000H0z" fill="url(#w)"/>
<path d="M470 430L560 330 572 560 560 660 530 560z" fill="#000" opacity=".7" filter="url(#b)"/>
<path d="M60 760L180 700 150 780 330 840 130 960 40 900z" fill="#000" opacity=".4" filter="url(#b)"/>
<g fill="url(#g)"><ellipse cx="665" cy="470" rx="210" ry="62" transform="rotate(48 665 470)" opacity=".4"/><ellipse cx="660" cy="470" rx="85" ry="190" transform="rotate(-12 660 470)" opacity=".3"/><ellipse cx="760" cy="490" rx="140" ry="60" opacity=".22"/><ellipse cx="1000" cy="345" rx="95" ry="120" opacity=".4"/><ellipse cx="1060" cy="330" rx="110" ry="60" opacity=".12"/><ellipse cx="780" cy="318" rx="140" ry="40" opacity=".26"/><ellipse cx="1095" cy="110" rx="55" ry="50" opacity=".3"/><ellipse cx="830" cy="412" rx="70" ry="24" opacity=".12"/></g>
</g>
<path class="edge" fill="none" stroke="#000" stroke-width="6" stroke-linejoin="round"/>
<g fill="none" stroke="#c80611" stroke-width="8" stroke-linejoin="round" stroke-linecap="round">
<path d="M572 335Q548 375 550 400 550 450 558 480 572 510 570 540L575 600 562 668M615 292Q630 325 645 342L680 360 735 388 780 448Q800 465 840 455L895 425 920 440M735 388L860 372 910 366M645 278L690 268 790 262 870 252 905 240 930 245 985 232 1050 235Q1085 245 1100 265L1130 285 1200 285M878 252L900 320 915 385 920 475" stroke-width="9"/>
<path d="M90 765L105 815 155 895M515 365l15-12" stroke-width="9"/>
<path d="M812 170L832 250M812 170L860 175M1050 160L1155 155M1040 190L1065 205 1085 230 1115 240 1140 212 1160 195 1178 215 1172 245 1185 260 1165 272 1120 265 1112 240M965 90L1025 62 1045 130 1050 160 1010 220M1035 95L1062 88M965 90L1000 118 1035 95M920 190L945 238M890 190L880 250M835 250L880 210 915 195M1050 180H1080M850 170L900 140 935 100 965 95M935 100L960 130 1045 140" stroke-width="7"/>
</g>
<g class="city" fill="none" stroke="#d00812" stroke-width="5" stroke-linejoin="round"></g>
</g></svg>`, (el, root) => {
  const P = [[85,927],[62,895],[50,850],[55,810],[85,770],[100,745],[130,735],[135,715],[165,705],[200,690],[230,670],[262,660],[262,630],[280,605],[310,595],[330,572],[375,540],[390,545],[450,530],[467,485],[505,470],[505,435],[522,420],[510,370],[550,335],[580,325],[610,292],[640,275],[650,258],[685,250],[740,245],[765,205],[780,160],[815,160],[820,135],[860,145],[870,125],[905,120],[925,85],[955,85],[965,70],[1000,55],[1055,55],[1065,80],[1100,75],[1130,105],[1150,140],[1185,170],[1200,240],[1208,285],[1190,310],[1100,360],[1075,395],[1050,395],[1020,420],[985,435],[968,430],[940,475],[905,485],[870,490],[830,512],[790,505],[765,545],[735,540],[695,525],[660,550],[665,600],[625,640],[570,670],[540,685],[505,735],[470,735],[445,715],[430,740],[400,765],[350,800],[310,810],[270,850],[220,880],[150,900]];
  let s = 7;
  const r = () => (s = (s * 16807) % 2147483647) / 2147483647;
  let d = 'M';
  P.forEach((p, i) => {
    const q = P[(i + 1) % P.length], n = Math.max(1, Math.round(Math.hypot(q[0] - p[0], q[1] - p[1]) / 10));
    for (let k = 0; k < n; k++) {
      const j = k ? 9 : 0;
      d += `${Math.round(p[0] + (q[0] - p[0]) * k / n + (r() - .5) * j)} ${Math.round(p[1] + (q[1] - p[1]) * k / n + (r() - .5) * j)} `;
    }
  });
  root.querySelectorAll('.edge').forEach(e => e.setAttribute('d', d + 'z'));
  // Street web: short crossing strokes gathered round three town centres.
  let c = '';
  [[872, 180, 45, 60, 26], [935, 145, 70, 60, 30], [1010, 165, 65, 90, 42]].forEach(([cx, cy, w, h, n]) => {
    for (let i = 0; i < n; i++) {
      const x = cx + (r() - .5) * w, y = cy + (r() - .5) * h;
      c += `M${Math.round(x)} ${Math.round(y)}l${Math.round((r() - .5) * 50)} ${Math.round((r() - .5) * 50)}l${Math.round((r() - .5) * 24)} ${Math.round((r() - .5) * 24)}`;
    }
  });
  root.querySelector('.city').innerHTML = `<path d="${c}"/>`;
});

define('map-view', `<style>
:host{display:grid;grid-template-rows:23px minmax(0,1fr) 24px;min-width:0;min-height:0;border-left:1px solid #d5d8d9}
.tabs{display:flex;align-items:center;gap:28px;border-bottom:2px solid #d6d9da;color:#333}
.tabs a{display:flex;align-items:center;gap:4px;height:21px;white-space:nowrap}
.tabs .on{background:#d5d8d8;padding:0 4px;border-radius:2px 2px 0 0;color:#4b4f52;margin-right:-23px}.on ui-icon:last-child{margin-left:3px}
.sp{flex:1}.tabs button{width:16px}
.status{display:flex;align-items:center;background:var(--face);color:#4a4e50;gap:5px;padding:0 4px}
select{appearance:none;width:95px;height:21px;border:1px solid #9a9ea0;background:#fff url("data:image/svg+xml,%3Csvg xmlns='http://www.w3.org/2000/svg' viewBox='0 0 8 8'%3E%3Cpath d='M1 2.500h6L4 6z' fill='%23444'/%3E%3C/svg%3E") right 3px center/6px no-repeat;padding:0 5px}
.s{width:1px;height:14px;background:#9fa3a5}.status button{width:16px;height:16px}.c{display:flex;gap:7px;align-items:center;white-space:nowrap}.dim{color:#8f9395;display:flex;align-items:center;gap:3px;white-space:nowrap}
</style>
<nav class="tabs" aria-label="Views"><a class="on" href="#map" aria-current="page"><ui-icon name="map" size="15"></ui-icon>Map<ui-icon name="x" size="13"></ui-icon></a><a href="#model"><ui-icon name="model" size="16"></ui-icon>Model</a><a href="#layout"><ui-icon name="layout" size="15"></ui-icon>Layout</a><a href="#layout1"><ui-icon name="layout" size="15"></ui-icon>Layout1</a><a href="#layout2"><ui-icon name="layout" size="15"></ui-icon>Layout2</a><span class="sp"></span>${ib('chevW','View list',13)}</nav>
<map-drawing></map-drawing>
<div class="status"><select aria-label="Map scale"><option>1:706,111</option></select><span class="s"></span>${ib('grid','Add grid',16)}${ib('snapgrid','Grid',14)}${ib('snap','Snapping',15)}${ib('infer','Inference',14)}${ib('north','Rotation',15)}<span class="s"></span><span class="sp"></span><span class="c"><span>499,384.64E 2,329,901.17N m</span>${ib('chevW','Coordinate units',15)}</span><span class="sp"></span><span class="s"></span><span class="dim"><ui-icon name="zsel" size="15"></ui-icon>Selected Features: 0</span><span class="s"></span>${ib('pause','Pause drawing',16)}<span class="s"></span>${ib('refresh','Refresh',16)}</div>`);

define('param-field', el => {
  const k = el.getAttribute('kind') || 'text';
  return `<style>
:host{display:grid;grid-template-columns:17px minmax(0,1fr) auto;color:#4b4f52}
label{grid-column:2/-1;grid-row:1;line-height:18px;height:18px}.req{grid-column:1;grid-row:1;align-self:center;justify-self:center}
.ctl{grid-column:2;grid-row:2;width:100%;height:20px;border:1px solid #9a9ea0;background:#fff;outline:0;padding:0 4px}
select{appearance:none;background:#fff url("data:image/svg+xml,%3Csvg xmlns='http://www.w3.org/2000/svg' viewBox='0 0 8 8'%3E%3Cpath d='M1.500 3L4 5.500 6.500 3' fill='none' stroke='%23555'/%3E%3C/svg%3E") right 3px center/8px no-repeat!important}
.b{grid-column:3;grid-row:2;display:flex}.b button{width:27px;height:20px}.b:empty{width:26px}:host([pencil]) .b{padding-right:8px}
:host([inline]) label{grid-column:2;line-height:20px;height:20px}:host([inline]) .ctl{grid-row:1;grid-column:3;width:124px;margin-right:1px}
</style>${el.hasAttribute('required') ? '<ui-icon class="req" name="ast" size="7"></ui-icon>' : ''}<label for="f">${el.getAttribute('label')}</label>${k === 'select' ? '<select class="ctl" id="f"><option></option></select>' : '<input class="ctl" id="f" type="text">'}${el.hasAttribute('inline') ? '' : `<span class="b">${el.hasAttribute('folder') ? ib('folder','Browse',15) : ''}${el.hasAttribute('pencil') ? ib('pencil','Draw',13) : ''}</span>`}`;
});

define('geo-pane', `<style>${headCss}
:host{display:grid;grid-template-rows:minmax(0,1fr) 18px;min-height:0;min-width:0}
.pane{background:var(--face);border:1px solid #dadddd;position:relative;display:flex;flex-direction:column;min-height:0}
.head{color:#333}.sub{display:grid;grid-template-columns:20px 1fr 20px;align-items:center;height:26px;padding:0 3px 0 5px;text-align:center;font-size:13px;line-height:20px;color:#55595c}
.note{display:grid;grid-template-columns:34px 1fr 20px;align-items:center;background:#d9eff7;margin-top:7px;height:38px;color:#4b4f52;white-space:nowrap;padding-left:1px}.note ui-icon{justify-self:center}.note a{color:#1f7a3e}.note button{justify-self:center;color:#666}.note p{margin:0 0 0 4px}
.tabs{display:flex;align-items:center;gap:8px;padding:0 4px 0 8px;height:26px;font-size:12px;color:#4b4f52}.tabs a{border-bottom:2px solid transparent;line-height:18px}.tabs .on{border-color:var(--teal);font-weight:600}.tabs .sp{flex:1}
form{display:flex;flex-direction:column;gap:1px;padding:4px 5px 0 0}
form .m{margin-top:2px}
summary{list-style:none;display:flex;align-items:center;gap:2px;height:22px;font-size:12px;font-weight:600;color:#4b4f52;white-space:nowrap}details:first-of-type{margin-top:3px}
.act{position:absolute;left:6px;bottom:4px;color:#b4b8ba;white-space:nowrap;pointer-events:none;opacity:.9}.act b{display:block;font-weight:400;font-size:18px;line-height:24px}.act span{font-size:13px;line-height:18px}
.run{position:absolute;right:13px;bottom:6px;width:72px;height:23px;border:1px solid #777c7e;border-radius:2px;background:#fcfdfd;color:#333;justify-content:flex-start;padding:0 0 0 10px;gap:6px}.run span{flex:1;text-align:left;font-size:12px}
.foot{display:flex}.foot a{flex:1;text-align:center;line-height:18px;color:#55595c}.foot .on{background:var(--face);color:var(--teal)}
</style>
<div class="pane">${paneHead('Geoprocessing')}
<div class="sub">${ib('backc','Back',18)}<span>Path Distance</span>${ib('addc','Add',18)}</div>
<div class="note"><ui-icon name="infoc" size="12"></ui-icon><p>The <a href="#da">Distance Accumulation</a> tool provides<br>enhanced functionality or performance.</p>${ib('x','Dismiss',12)}</div>
<nav class="tabs"><a class="on" href="#p">Parameters</a><a href="#e">Environments</a><span class="sp"></span>${ib('helpc','Help',17)}</nav>
<form><param-field required kind="select" folder pencil label="Input raster or feature source data"></param-field><param-field required label="Output distance raster"></param-field><param-field kind="select" folder label="Input cost raster"></param-field><param-field kind="select" folder label="Input surface raster"></param-field><param-field class="m" inline label="Maximum distance"></param-field><param-field folder label="Output backlink raster"></param-field>
<details><summary><ui-icon name="chevR" size="15"></ui-icon>Horizontal factor parameters (optional)</summary></details><details><summary><ui-icon name="chevR" size="15"></ui-icon>Vertical factor parameters (optional)</summary></details><details><summary><ui-icon name="chevR" size="15"></ui-icon>Source Characteristics</summary></details></form>
<button type="button" class="run"><ui-icon name="run" size="16"></ui-icon><span>Run</span><ui-icon name="chev" size="13"></ui-icon></button>
<div class="act"><b>Activate Windows</b><span>Go to Settings to activate Windows.</span></div></div>
<nav class="foot"><a href="#1">C...</a><a href="#2">C...</a><a href="#3" class="on">G...</a><a href="#4">S...</a><a href="#5">E...</a><a href="#6">E...</a><a href="#7">A...</a><a href="#8">H...</a><a href="#9">M..</a><a href="#10">E...</a></nav>`);

define('demo-banner', `<style>
:host{position:absolute;left:0;right:0;top:466px;height:145px;background:rgba(120,100,150,.14);pointer-events:none;display:flex;align-items:center;padding-left:278px;color:rgba(255,255,255,.6);white-space:nowrap;text-shadow:0 1px 2px rgba(90,80,110,.18)}
svg{flex:none}b{font:600 29px/32px Inter,sans-serif;width:217px;margin-left:16px}
p{margin:0;padding:6px 0 6px 24px;border-left:1px solid rgba(255,255,255,.5);font-size:22px;line-height:40px;color:rgba(255,255,255,.5)}
</style><svg width="81" height="81" viewBox="0 0 81 81"><defs><linearGradient id="a" x2="0" y2="1"><stop stop-color="#7e64a4"/><stop offset="1" stop-color="#7d5b86"/></linearGradient><linearGradient id="r" x1="0" y1="0" x2="1" y2="1"><stop stop-color="#b06cff"/><stop offset=".5" stop-color="#b44dfa"/><stop offset="1" stop-color="#8a4ec0"/></linearGradient></defs><rect width="81" height="81" rx="17" fill="url(#a)"/><path d="M36 21a20 20 0 1 0 23 21" fill="none" stroke="url(#r)" stroke-width="13" stroke-linecap="round"/><path d="M36 60h3" stroke="#b838d8" stroke-width="12" stroke-linecap="round" opacity=".6"/><circle cx="59" cy="22" r="8.500" fill="#fb70bd"/></svg>
<b>Wondershare<br>DemoCreator</b><p>Created with<br>Wondershare DemoCreator free plan</p>`);

define('side-handle', `<style>:host{position:absolute;right:0;top:320px}button{width:35px;height:55px;background:#151d27;border-radius:8px 0 0 8px;color:#d5d9dd}svg{margin-left:4px}</style><button type="button" aria-label="Open side panel"><svg width="12" height="20" viewBox="0 0 12 20"><path d="M10 1L2 10l8 9" fill="none" stroke="currentColor" stroke-width="1.800"/></svg></button>`);
define('mouse-pointer', `<style>:host{position:absolute;left:53px;top:459px;pointer-events:none}</style><ui-icon name="arrow" size="17"></ui-icon>`);

define('gis-app', `<style>
:host{position:relative;display:flex;flex-direction:column;min-height:100vh;padding:16px 0;background:#000}
.win{flex:1;display:flex;flex-direction:column;background:#e8ebeb;border-bottom:2px solid #b4b7b8;min-height:0}
.top{background:var(--face)}
.work{flex:1;display:grid;grid-template-columns:208px minmax(0,1fr) 274px;gap:6px;padding:7px 8px 6px 3px;min-height:0;height:0}
.task{height:6px;display:flex;background:#222325}.task i{width:41px;background:#33323c}.task b{width:271px;background:#e9ecec}.task u{width:45px;margin-left:140px;background:#4b4d4d}
</style><div class="win"><div class="top"><title-bar></title-bar><ribbon-tabs></ribbon-tabs><ribbon-bar></ribbon-bar></div>
<div class="work"><contents-pane></contents-pane><map-view></map-view><geo-pane></geo-pane></div></div>
<div class="task"><i></i><b></b><u></u></div>
<demo-banner></demo-banner><side-handle></side-handle><mouse-pointer></mouse-pointer>`);
</script>
</body>
</html>
